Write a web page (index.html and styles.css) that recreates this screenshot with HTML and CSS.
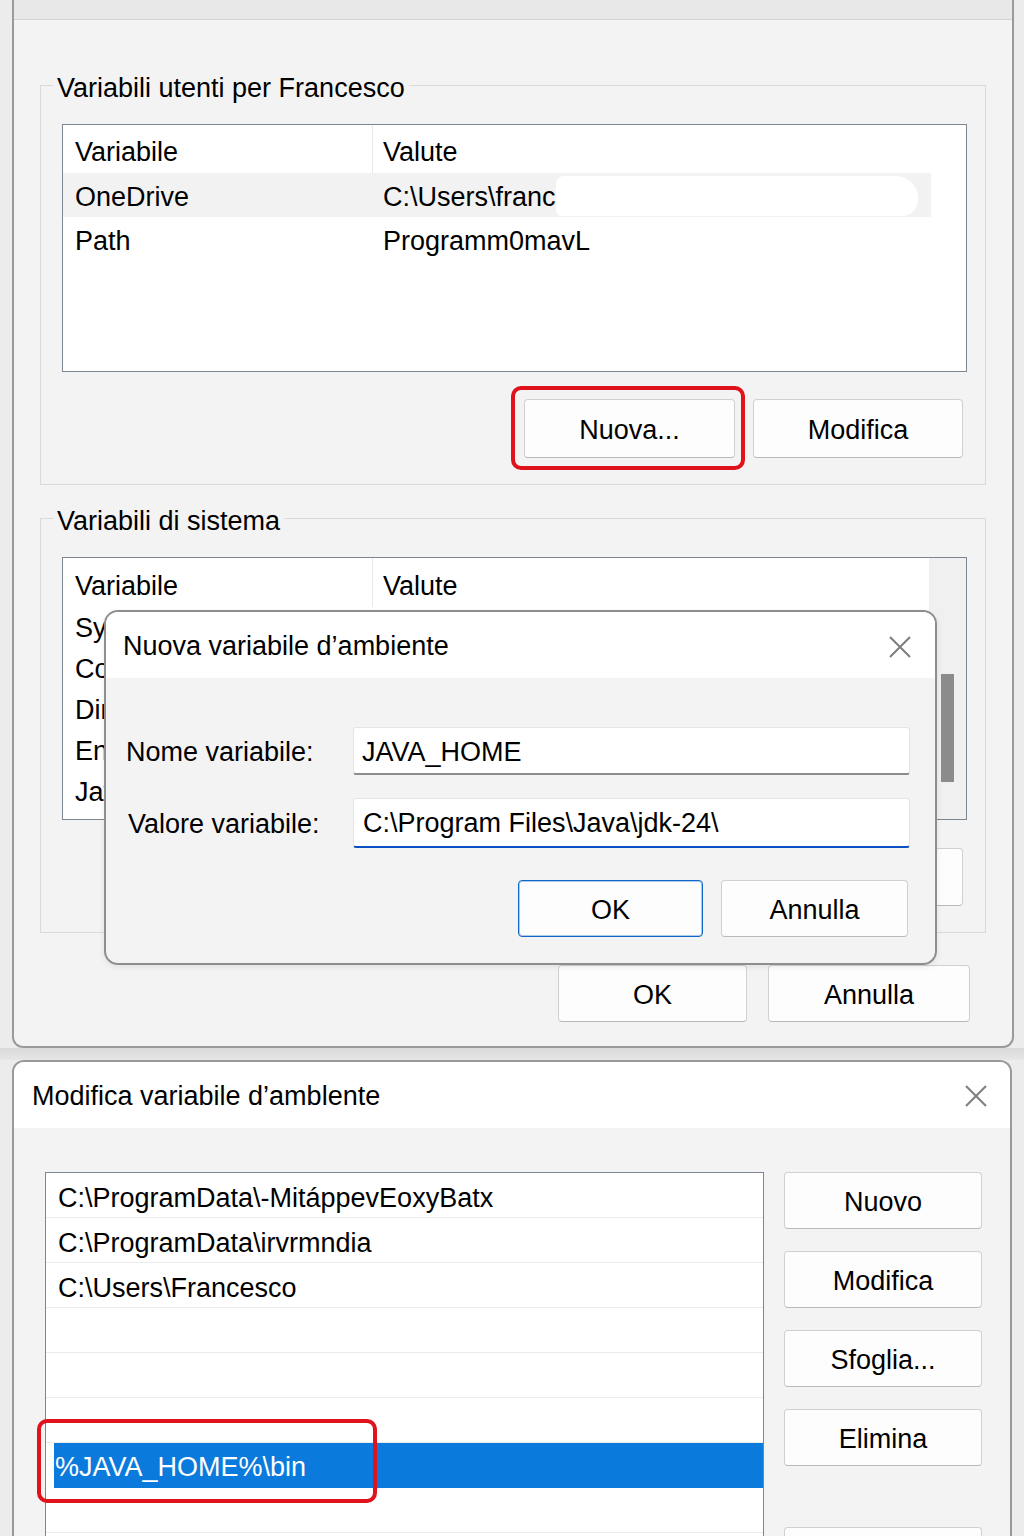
FILE: index.html
```html
<!DOCTYPE html>
<html lang="it">
<head>
<meta charset="utf-8">
<title>Variabili d'ambiente</title>
<link rel="stylesheet" href="styles.css">
</head>
<body>
<div class="win win-top">
  <div class="topband"></div>
  <div class="win-top-body">
    <fieldset class="group">
      <legend>Variabili utenti per Francesco</legend>
      <div class="group-inner">
        <div class="table table-user">
          <div class="tmain">
            <div class="trow thead"><div class="c1">Variabile</div><div class="c2">Valute</div></div>
            <div class="trow tr-hl"><div class="c1">OneDrive</div><div class="c2">C:\Users\franc<span class="redact"></span></div></div>
            <div class="trow"><div class="c1">Path</div><div class="c2">Programm0mavL</div></div>
          </div>
          <div class="vspace"></div>
        </div>
        <div class="btnrow">
          <div class="mark"><button class="btn btn-g">Nuova...</button></div>
          <button class="btn btn-g">Modifica</button>
        </div>
      </div>
    </fieldset>

    <fieldset class="group group-sys">
      <legend>Variabili di sistema</legend>
      <div class="group-inner">
        <div class="table table-sys">
          <div class="tmain">
            <div class="trow thead"><div class="c1">Variabile</div><div class="c2">Valute</div></div>
            <div class="trow"><div class="c1">Sys</div><div class="c2"></div></div>
            <div class="trow"><div class="c1">Com</div><div class="c2"></div></div>
            <div class="trow"><div class="c1">Dir</div><div class="c2"></div></div>
            <div class="trow"><div class="c1">Env</div><div class="c2"></div></div>
            <div class="trow"><div class="c1">Jav</div><div class="c2"></div></div>
          </div>
          <div class="vscroll"><div class="thumb"></div></div>
        </div>
        <div class="btnrow btnrow-sys">
          <button class="btn btn-g">Nuova...</button>
          <button class="btn btn-g">Modifica</button>
          <button class="btn btn-g">Elimina</button>
        </div>
      </div>
    </fieldset>

    <div class="footer">
      <button class="btn btn-ok">OK</button>
      <button class="btn btn-cancel">Annulla</button>
    </div>
  </div>

  <div class="dialog">
    <div class="dlg-title">
      <span>Nuova variabile d’ambiente</span>
      <svg class="close" width="24" height="24" viewBox="0 0 24 24"><path d="M2 2L22 22M22 2L2 22" stroke="#7d7d7d" stroke-width="2" fill="none"/></svg>
    </div>
    <div class="dlg-body">
      <div class="fields">
        <div class="flabel">Nome variabile:</div>
        <div class="finput">JAVA_HOME</div>
        <div class="flabel flabel2">Valore variabile:</div>
        <div class="finput finput-focus">C:\Program Files\Java\jdk-24\</div>
      </div>
      <div class="dlg-btns">
        <button class="btn btn-primary">OK</button>
        <button class="btn btn-dlg-cancel">Annulla</button>
      </div>
    </div>
  </div>
</div>

<div class="seam"></div>

<div class="win win-edit">
  <div class="edit-title">
    <span>Modifica variabile d’amblente</span>
    <svg class="close" width="24" height="24" viewBox="0 0 24 24"><path d="M2 2L22 22M22 2L2 22" stroke="#7d7d7d" stroke-width="2" fill="none"/></svg>
  </div>
  <div class="edit-body">
    <div class="plist">
      <div class="prow">C:\ProgramData\-MitáppevEoxyBatx</div>
      <div class="prow">C:\ProgramData\irvrmndia</div>
      <div class="prow">C:\Users\Francesco</div>
      <div class="prow"></div>
      <div class="prow"></div>
      <div class="prow"></div>
      <div class="prow prow-sel">%JAVA_HOME%\bin</div>
      <div class="prow"></div>
      <div class="prow"></div>
      <div class="sel-mark"></div>
    </div>
    <div class="side-btns">
      <button class="btn btn-side">Nuovo</button>
      <button class="btn btn-side">Modifica</button>
      <button class="btn btn-side">Sfoglia...</button>
      <button class="btn btn-side">Elimina</button>
      <button class="btn btn-side btn-side-far"></button>
    </div>
  </div>
</div>
</body>
</html>
```
FILE: styles.css
```css
* { box-sizing: border-box; }
html, body { margin: 0; padding: 0; }
body {
  width: 1024px;
  height: 1536px;
  overflow: hidden;
  background: #ececec;
  font-family: "Liberation Sans", Arial, sans-serif;
  font-size: 27px;
  color: #000;
}

/* windows */
.win {
  margin-left: 12px;
  background: #f3f3f3;
  border: 2px solid #9a9a9a;
  position: relative;
}
.win-top {
  width: 1002px;
  height: 1048px;
  border-top: none;
  border-radius: 0 0 11px 11px;
}
.topband {
  height: 20px;
  background: #e8e8e8;
  border-bottom: 1px solid #d4d4d4;
}
.win-top-body {
  padding: 46px 26px 0 26px;
}

/* group boxes */
.group {
  margin: 0;
  padding: 0;
  min-width: 0;
  border: 1px solid #dadada;
}
.group legend {
  margin-left: 12px;
  padding: 6px 4px 0;
  line-height: 32px;
  font-size: 27px;
}
.group-sys { margin-top: 14px; }
.group-inner {
  padding: 20px 18px 26px 21px;
}

/* tables */
.table {
  display: flex;
  background: #fff;
  border: 1px solid #7c8692;
}
.table-user { height: 248px; }
.table-sys { height: 263px; }
.tmain { flex: 1; overflow: hidden; }
.vspace { width: 35px; }
.vscroll {
  width: 37px;
  background: #f0f0f0;
  padding: 116px 0 0 12px;
}
.thumb {
  width: 13px;
  height: 108px;
  background: #8b8b8b;
}
.trow {
  display: flex;
  height: 44px;
  line-height: 48px;
  white-space: nowrap;
}
.table-sys .trow { height: 41px; line-height: 42px; }
.trow.thead { height: 48px; line-height: 54px; }
.table-sys .trow.thead { height: 49px; line-height: 56px; }
.c1 { width: 310px; padding-left: 12px; }
.c2 { flex: 1; padding-left: 10px; }
.thead .c1 { border-right: 1px solid #e8e8e8; }
.tr-hl { background: #f2f2f2; }
.redact {
  display: inline-block;
  width: 362px;
  height: 40px;
  vertical-align: middle;
  background: #fff;
  border-radius: 8px 22px 16px 6px;
  margin-top: -6px;
}

/* buttons */
.btn {
  font-family: "Liberation Sans", Arial, sans-serif;
  font-size: 27px;
  color: #000;
  background: #fdfdfd;
  border: 1px solid #d0d0d0;
  border-bottom-color: #b9b9b9;
  border-radius: 4px;
  padding: 3px 0 0;
  margin: 0;
}
.btnrow {
  display: flex;
  justify-content: flex-end;
  gap: 18px;
  margin-top: 27px;
  padding-right: 4px;
}
.btnrow-sys { margin-top: 28px; }
.btn-g { width: 210px; height: 59px; }
.btnrow-sys .btn-g { height: 58px; }
.mark { position: relative; }
.mark .btn-g { width: 211px; }
.mark::after {
  content: "";
  position: absolute;
  top: -13px;
  left: -13px;
  right: -10px;
  bottom: -12px;
  border: 4px solid #e0121b;
  border-radius: 10px;
}

.footer {
  display: flex;
  justify-content: flex-end;
  gap: 21px;
  margin-top: 32px;
  padding-right: 16px;
}
.btn-ok { width: 189px; height: 57px; }
.btn-cancel { width: 202px; height: 57px; }

/* dialog nuova variabile */
.dialog {
  position: absolute;
  left: 90px;
  top: 610px;
  width: 833px;
  height: 355px;
  background: #f3f3f3;
  border: 2px solid #8e8e8e;
  border-radius: 14px;
  overflow: hidden;
  box-shadow: 0 2px 6px rgba(0,0,0,0.08);
}
.dlg-title {
  height: 66px;
  background: #fff;
  display: flex;
  align-items: center;
  justify-content: space-between;
  padding: 3px 23px 0 17px;
}
.dlg-body {
  padding: 49px 25px 0 20px;
}
.fields {
  display: grid;
  grid-template-columns: 227px 1fr;
  row-gap: 23px;
  align-items: center;
}
.flabel { padding-top: 3px; }
.flabel2 { padding-left: 2px; }
.finput {
  height: 48px;
  line-height: 48px;
  padding-left: 8px;
  background: #fff;
  border: 1px solid #e4e4e4;
  border-bottom: 2px solid #8c8c8c;
  border-radius: 3px;
  white-space: nowrap;
}
.finput-focus {
  height: 50px;
  line-height: 48px;
  padding-left: 9px;
  border-bottom: 2px solid #0b4fc4;
}
.dlg-btns {
  display: flex;
  justify-content: flex-end;
  gap: 18px;
  margin-top: 32px;
  padding-right: 2px;
}
.btn-primary {
  width: 185px;
  height: 57px;
  border: 1px solid #1167c9;
  box-shadow: inset 0 0 0 1px rgba(17,103,201,0.35);
}
.btn-dlg-cancel { width: 187px; height: 57px; }

/* seam between windows */
.seam {
  height: 12px;
  background: linear-gradient(#d9d9d9, #e6e6e6);
}

/* modifica window */
.win-edit {
  width: 1000px;
  height: 490px;
  border-bottom: none;
  border-radius: 12px 12px 0 0;
  overflow: hidden;
}
.edit-title {
  height: 66px;
  background: #fff;
  display: flex;
  align-items: center;
  justify-content: space-between;
  padding: 2px 22px 0 18px;
}
.edit-body {
  display: flex;
  gap: 20px;
  padding: 44px 0 0 31px;
}
.plist {
  position: relative;
  width: 719px;
  height: 420px;
  background: #fff;
  border: 1px solid #7d8590;
  border-bottom: none;
}
.prow {
  height: 45px;
  line-height: 51px;
  padding-left: 12px;
  border-bottom: 1px solid #ebebeb;
  white-space: nowrap;
}
.prow-sel {
  margin-left: 8px;
  padding-left: 1px;
  background: #0a7bdc;
  color: #fff;
  border-bottom-color: #0a7bdc;
  line-height: 48px;
}
.sel-mark {
  position: absolute;
  left: -9px;
  top: 246px;
  width: 340px;
  height: 84px;
  border: 4px solid #e0121b;
  border-radius: 10px;
}
.side-btns {
  display: flex;
  flex-direction: column;
  gap: 22px;
}
.btn-side { width: 198px; height: 57px; flex: none; }
.btn-side-far { margin-top: 39px; }
```
